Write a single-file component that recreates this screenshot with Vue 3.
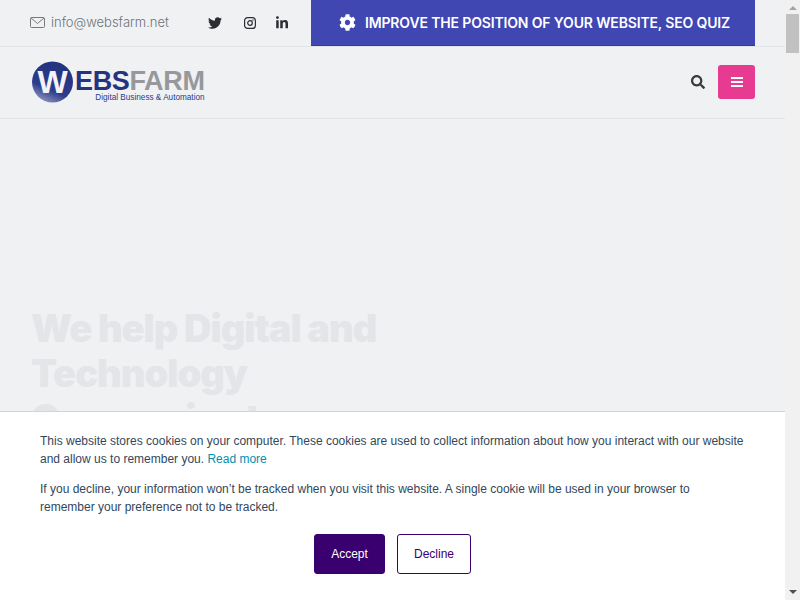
<template>
  <div class="screen">
    <div class="page">
      <div class="topbar">
        <a class="mail">
          <svg class="mail-icon" viewBox="0 0 15 11" width="15" height="11">
            <rect x="0.5" y="0.5" width="14" height="10" rx="1" fill="none" stroke="#77797e" />
            <path d="M1 1l6.5 5.5L14 1" fill="none" stroke="#77797e" />
          </svg>
          <span>info@websfarm.net</span>
        </a>
        <div class="socials">
          <svg viewBox="0 0 512 512" width="14" height="14"><path :d="icons.twitter" /></svg>
          <svg class="insta" viewBox="0 0 12 12" width="12" height="12">
            <rect x="0.6" y="0.6" width="10.8" height="10.8" rx="3" fill="none" stroke="#2b2d31" stroke-width="1.2" />
            <circle cx="6" cy="6" r="2.3" fill="none" stroke="#2b2d31" stroke-width="1.2" />
            <circle cx="9" cy="3" r="0.7" fill="#2b2d31" />
          </svg>
          <svg class="linkedin" viewBox="0 0 448 512" width="12" height="14"><path :d="icons.linkedin" /></svg>
        </div>
        <a class="quiz">
          <svg viewBox="0 0 512 512" width="17" height="17"><path :d="icons.cog" fill="#fff" /></svg>
          <span>IMPROVE THE POSITION OF YOUR WEBSITE, SEO QUIZ</span>
        </a>
      </div>

      <header class="navbar">
        <div class="logo">
          <svg class="logo-mark" viewBox="0 0 44 44" width="44" height="44">
            <defs>
              <linearGradient id="ball" x1="0.7" y1="0.1" x2="0.3" y2="1">
                <stop offset="0" stop-color="#24337f" />
                <stop offset="0.65" stop-color="#2c3c8c" />
                <stop offset="1" stop-color="#8f95bd" />
              </linearGradient>
            </defs>
            <circle cx="21.5" cy="22" r="20.5" fill="url(#ball)" />
            <text x="21.5" y="33" text-anchor="middle" class="logo-w">W</text>
          </svg>
          <div class="logo-words">
            <div class="logo-name"><span class="webs">EBS</span><span class="farm">FARM</span></div>
            <div class="logo-tag">Digital Business &amp; Automation</div>
          </div>
        </div>
        <div class="nav-actions">
          <svg viewBox="0 0 512 512" width="14" height="14"><path :d="icons.search" fill="#3a3a3c" /></svg>
          <button class="menu-btn">
            <svg viewBox="0 0 12 10" width="12" height="10">
              <rect y="0" width="12" height="2" fill="#fff" />
              <rect y="4" width="12" height="2" fill="#fff" />
              <rect y="8" width="12" height="2" fill="#fff" />
            </svg>
          </button>
        </div>
      </header>

      <section class="hero">
        <h1>We help Digital and<br />Technology<br />Companies to</h1>
      </section>

      <div class="cookie">
        <p>This website stores cookies on your computer. These cookies are used to collect information about how you interact with our website and allow us to remember you. <a>Read more</a></p>
        <p>If you decline, your information won’t be tracked when you visit this website. A single cookie will be used in your browser to remember your preference not to be tracked.</p>
        <div class="cookie-btns">
          <button class="accept">Accept</button>
          <button class="decline">Decline</button>
        </div>
      </div>
    </div>

    <div class="scrollbar">
      <span class="arrow up"></span>
      <div class="thumb"></div>
      <span class="arrow down"></span>
    </div>
  </div>
</template>

<script setup>
const icons = {
  twitter: 'M459.37 151.716c.325 4.548.325 9.097.325 13.645 0 138.72-105.583 298.558-298.558 298.558-59.452 0-114.68-17.219-161.137-47.106 8.447.974 16.568 1.299 25.34 1.299 49.055 0 94.213-16.568 130.274-44.832-46.132-.975-84.792-31.188-98.112-72.772 6.498.974 12.995 1.624 19.818 1.624 9.421 0 18.843-1.3 27.614-3.573-48.081-9.747-84.143-51.98-84.143-102.985v-1.299c13.969 7.797 30.214 12.67 47.431 13.319-28.264-18.843-46.781-51.005-46.781-87.391 0-19.492 5.197-37.36 14.294-52.954 51.655 63.675 129.3 105.258 216.365 109.807-1.624-7.797-2.599-15.918-2.599-24.04 0-57.828 46.782-104.934 104.934-104.934 30.213 0 57.502 12.67 76.67 33.137 23.715-4.548 46.456-13.32 66.599-25.34-7.798 24.366-24.366 44.833-46.132 57.827 21.117-2.273 41.584-8.122 60.426-16.243-14.292 20.791-32.161 39.308-52.628 54.253z',
  linkedin: 'M100.28 448H7.4V148.9h92.88zM53.79 108.1C24.09 108.1 0 83.5 0 53.8a53.79 53.79 0 0 1 107.58 0c0 29.7-24.1 54.3-53.79 54.3zM447.9 448h-92.68V302.4c0-34.7-.7-79.2-48.29-79.2-48.29 0-55.69 37.7-55.69 76.7V448h-92.78V148.9h89.08v40.8h1.3c12.4-23.5 42.69-48.3 87.88-48.3 94 0 111.28 61.9 111.28 142.3V448z',
  search: 'M505 442.7L405.3 343c-4.5-4.5-10.6-7-17-7H372c27.6-35.3 44-79.7 44-128C416 93.1 322.9 0 208 0S0 93.1 0 208s93.1 208 208 208c48.3 0 92.7-16.4 128-44v16.3c0 6.4 2.5 12.5 7 17l99.7 99.7c9.4 9.4 24.6 9.4 33.9 0l28.3-28.3c9.4-9.4 9.4-24.6.1-34zM208 336c-70.7 0-128-57.2-128-128 0-70.7 57.2-128 128-128 70.7 0 128 57.2 128 128 0 70.7-57.2 128-128 128z',
  cog: 'M487.4 315.7l-42.6-24.6c4.3-23.2 4.3-47 0-70.2l42.6-24.6c4.9-2.8 7.1-8.6 5.5-14-11.1-35.6-30-67.8-54.7-94.6-3.8-4.1-10-5.1-14.8-2.3L380.8 110c-17.9-15.4-38.5-27.3-60.8-35.1V25.8c0-5.6-3.9-10.5-9.4-11.7-36.7-8.2-74.3-7.8-109.2 0-5.5 1.2-9.4 6.1-9.4 11.7V75c-22.2 7.9-42.8 19.8-60.8 35.1L88.7 85.5c-4.9-2.8-11-1.9-14.8 2.3-24.7 26.7-43.6 58.9-54.7 94.6-1.7 5.4.6 11.2 5.5 14L67.3 221c-4.3 23.2-4.3 47 0 70.2l-42.6 24.6c-4.9 2.8-7.1 8.6-5.5 14 11.1 35.6 30 67.8 54.7 94.6 3.8 4.1 10 5.1 14.8 2.3l42.6-24.6c17.9 15.4 38.5 27.3 60.8 35.1v49.2c0 5.6 3.9 10.5 9.4 11.7 36.7 8.2 74.3 7.8 109.2 0 5.5-1.2 9.4-6.1 9.4-11.7v-49.2c22.2-7.9 42.8-19.8 60.8-35.1l42.6 24.6c4.9 2.8 11 1.9 14.8-2.3 24.7-26.7 43.6-58.9 54.7-94.6 1.5-5.5-.7-11.3-5.6-14.1zM256 336c-44.1 0-80-35.9-80-80s35.9-80 80-80 80 35.9 80 80-35.9 80-80 80z'
}
</script>

<style>
html, body { margin: 0; overflow: hidden; }
</style>

<style scoped>
.screen { display: flex; width: 800px; height: 600px; overflow: hidden; font-family: "Inter", "Liberation Sans", sans-serif; }
.page { position: relative; width: 785px; height: 600px; background: #f0f1f3; overflow: hidden; }

.topbar { display: flex; align-items: stretch; height: 46px; padding: 0 30px; border-bottom: 1px solid #e1e3e7; }
.mail { display: flex; align-items: center; gap: 6px; padding-bottom: 2px; font-size: 13px; font-weight: 300; color: #6f7176; width: 178px; }
.socials { display: flex; align-items: center; gap: 22px; width: 103px; fill: #2b2d31; }
.linkedin { margin-left: -2px; }
.quiz { display: flex; align-items: center; gap: 9px; width: 444px; box-sizing: border-box; padding-left: 28px; background: #4046b2; border-bottom: 1px solid #343a9c; color: #fff; font-size: 14px; font-weight: 600; letter-spacing: -0.15px; white-space: nowrap; }

.navbar { display: flex; align-items: center; justify-content: space-between; height: 69px; padding: 0 30px 2px 31px; border-bottom: 1px solid #e1e3e7; }
.logo { display: flex; align-items: center; }
.logo-mark { margin-right: -1px; }
.logo-w { font-family: "Liberation Sans", sans-serif; font-size: 32px; font-weight: 700; fill: #f3f3f6; }
.logo-words { display: flex; flex-direction: column; margin-top: 9px; margin-left: 1px; }
.logo-name { font-family: "Liberation Sans", sans-serif; font-size: 27px; line-height: 24px; font-weight: 700; letter-spacing: -0.35px; }
.webs { color: #26347f; }
.farm { color: #97989c; }
.logo-tag { font-family: "Liberation Sans", sans-serif; font-size: 8.2px; line-height: 10px; color: #2a3a90; text-align: right; }

.nav-actions { display: flex; align-items: center; gap: 13px; }
.menu-btn { display: flex; align-items: center; justify-content: center; width: 37px; height: 34px; padding: 0; border: none; border-radius: 3px; background: #e63b90; }

.hero { padding: 187px 30px 0 31px; }
.hero h1 { margin: 0; font-size: 38px; line-height: 45px; font-weight: 900; letter-spacing: -1px; color: #e4e5e9; }

.cookie { position: absolute; left: 0; right: 0; top: 411px; height: 189px; box-sizing: border-box; padding: 20px 40px 0; background: #fff; border-top: 1px solid #cbd6e2; font-family: "Liberation Sans", sans-serif; font-size: 12px; line-height: 18px; color: #33475b; }
.cookie p { margin: 0 0 12px; }
.cookie a { color: #0091ae; }
.cookie-btns { display: flex; justify-content: center; gap: 12px; margin-top: 18px; }
.cookie-btns button { height: 40px; border-radius: 3px; font-family: "Liberation Sans", sans-serif; font-size: 12px; border: 1px solid #3a006f; }
.accept { width: 71px; background: #3a006f; color: #fff; }
.decline { width: 74px; background: #fff; color: #3a006f; }

.scrollbar { position: relative; display: flex; flex-direction: column; align-items: center; width: 15px; height: 600px; background: #f1f1f1; }
.thumb { width: 13px; height: 39px; margin-top: 4px; background: #c1c1c1; }
.arrow { width: 0; height: 0; border-left: 4px solid transparent; border-right: 4px solid transparent; }
.arrow.up { margin-top: 6px; border-bottom: 4px solid #a3a3a3; height: 0; }
.arrow.down { margin-top: auto; margin-bottom: 6px; border-top: 4px solid #505050; }
</style>
